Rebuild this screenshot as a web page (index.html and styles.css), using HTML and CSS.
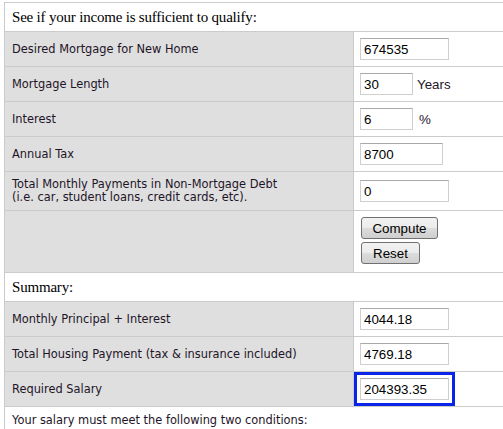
FILE: index.html
```html
<!DOCTYPE html>
<html>
<head>
<meta charset="utf-8">
<link rel="stylesheet" href="styles.css">
</head>
<body>
<div class="wrap">
<table class="calc">
  <colgroup><col class="c1"><col class="c2"></colgroup>
  <tr class="head"><td colspan="2">See if your income is sufficient to qualify:</td></tr>
  <tr><td class="lbl">Desired Mortgage for New Home</td><td class="val"><input class="w89" value="674535"></td></tr>
  <tr><td class="lbl">Mortgage Length</td><td class="val"><input class="w53" value="30"><span class="unit">Years</span></td></tr>
  <tr><td class="lbl">Interest</td><td class="val"><input class="w53" value="6"><span class="unit pct">%</span></td></tr>
  <tr><td class="lbl">Annual Tax</td><td class="val"><input class="w83" value="8700"></td></tr>
  <tr class="debt"><td class="lbl">Total Monthly Payments in Non-Mortgage Debt<br>(i.e. car, student loans, credit cards, etc).</td><td class="val"><input class="w89" value="0"></td></tr>
  <tr class="btns"><td class="lbl"></td><td class="val"><button class="btn compute">Compute</button><button class="btn reset">Reset</button></td></tr>
  <tr class="head"><td colspan="2">Summary:</td></tr>
  <tr><td class="lbl">Monthly Principal + Interest</td><td class="val"><input class="w89" value="4044.18"></td></tr>
  <tr><td class="lbl">Total Housing Payment (tax &amp; insurance included)</td><td class="val"><input class="w89" value="4769.18"></td></tr>
  <tr><td class="lbl">Required Salary</td><td class="val"><input class="w89 hl" value="204393.35"></td></tr>
  <tr class="note"><td colspan="2">Your salary must meet the following two conditions:</td></tr>
</table>
</div>
</body>
</html>
```
FILE: styles.css
```css
html, body { margin: 0; padding: 0; overflow: hidden; background: #fff; }
.wrap { padding: 2px 0 0 4px; }
.calc {
  border-collapse: collapse;
  width: 540px;
  table-layout: fixed;
  font-family: "DejaVu Sans", Verdana, sans-serif;
  font-size: 11.4px;
  color: #1e1428;
  border: 1px solid #cbcbcb;
}
.c1 { width: 349px; }
.c2 { width: 191px; }
.calc td {
  border: 1px solid #cbcbcb;
  padding: 6px 7px;
  vertical-align: middle;
  line-height: 13px;
  white-space: nowrap;
}
.calc td.lbl { background: #dfdfdf; height: 22px; }
.calc td.val { background: #fff; padding-left: 6px; }
.head td {
  font-family: "Liberation Serif", "Times New Roman", serif;
  font-size: 15px;
  letter-spacing: -0.2px;
  color: #000;
  height: 28px;
  padding-top: 0; padding-bottom: 0;
  background: #fff;
}
.debt td.lbl { height: 26px; }
.btns td.lbl { height: 48px; }
.note td { padding-top: 7px; }
input {
  box-sizing: border-box;
  height: 22px;
  border: 1px solid #cfcfcf;
  border-top-color: #a9a9a9;
  padding: 0 3px;
  margin: 0;
  font-family: "Liberation Sans", Arial, sans-serif;
  font-size: 13.33px;
  color: #000;
  vertical-align: middle;
  background: #fff;
}
.w89 { width: 89px; }
.w53 { width: 53px; }
.w83 { width: 83px; }
.hl { outline: 3px solid #0a24e8; outline-offset: 3px; }
.unit {
  font-family: "Liberation Sans", Arial, sans-serif;
  font-size: 13.33px;
  color: #1e1428;
  margin-left: 4px;
  vertical-align: middle;
}
.pct { margin-left: 6px; }
.btn {
  display: block;
  box-sizing: border-box;
  height: 22px;
  margin: 0 0 2px 1px;
  padding: 0 6px;
  font-family: "Liberation Sans", Arial, sans-serif;
  font-size: 13.33px;
  color: #000;
  border: 1px solid #707070;
  border-radius: 3px;
  background: linear-gradient(#f2f2f2, #ebebeb 50%, #dddddd 50%, #cfcfcf);
}
.compute { width: 77px; margin-bottom: 3px; }
.reset { width: 59px; }
```
